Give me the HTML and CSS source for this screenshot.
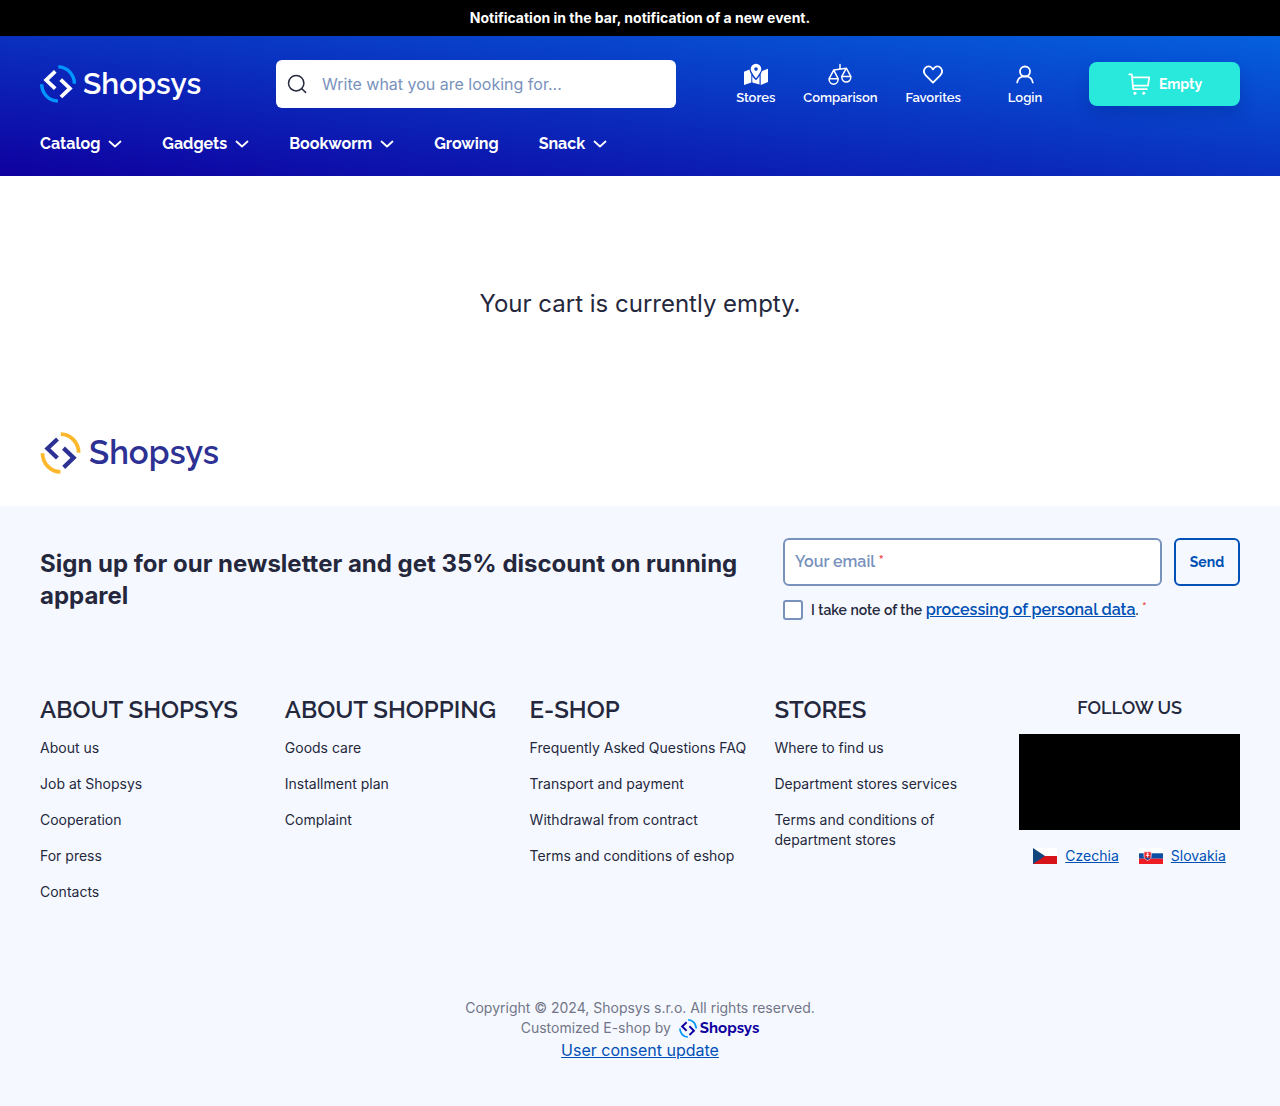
FILE: index.html
```html
<!DOCTYPE html>
<html lang="en">
<head>
<meta charset="utf-8">
<meta name="viewport" content="width=device-width, initial-scale=1">
<title>Cart | Shopsys</title>
<link rel="stylesheet" href="styles.css">
</head>
<body>
<svg class="sprite" aria-hidden="true">
  <symbol id="logo" viewBox="0 0 36 38">
    <g fill="none">
      <g class="logo-arc" stroke-width="3.4"><path d="M18.300 1.900A16.200 17 0 0 1 34.400 18.800M1.700 19.200A16.200 17 0 0 0 17.900 36"/></g>
      <path stroke="currentColor" stroke-width="3.8" d="M15.300 6.400 6.200 15l9 8.600M20.700 14.600l9.200 8.800-9 8.600"/>
    </g>
  </symbol>
  <symbol id="chevron" viewBox="0 0 14 14">
    <path d="m1.500 4.500 5.500 5 5.500-5" fill="none" stroke="currentColor" stroke-width="1.8" stroke-linecap="round" stroke-linejoin="round"/>
  </symbol>
</svg>

<div class="notice">Notification in the bar, notification of a new event.</div>

<header class="header">
  <div class="header-row">
    <a class="logo logo-header" href="#"><svg><use href="#logo"/></svg>Shopsys</a>
    <form class="search">
      <button class="search-button" type="submit" aria-label="Search">
        <svg viewBox="0 0 20 20" width="20" height="20" fill="none" stroke="currentColor" stroke-width="1.5" stroke-linecap="round"><circle cx="9.200" cy="9.200" r="7.700"/><path d="m14.800 14.800 3.800 3.600"/></svg>
      </button>
      <input class="search-input" type="search" aria-label="Search" placeholder="Write what you are looking for...">
    </form>
    <nav class="tools" aria-label="Account">
      <a class="tool" href="#">
        <svg viewBox="0 0 24 24" fill="currentColor"><path d="M0 8.700 5.500 6.400c.2 1.700 1 3.300 1.800 4.800v8.400L0 22zM8.300 12.900c.9 1.400 1.900 2.600 2.800 3.700.5.600 1.300.6 1.800 0 .8-1 1.700-2.200 2.600-3.500v8.500l-7.200-2zM17 10.600c.4-.9.8-1.800 1-2.700L24 5.700v13.400L16.700 22v-11zM12 .8a5.300 5.300 0 0 0-5.300 5.300c0 2.500 3.300 6.900 4.700 8.600.3.400.9.400 1.200 0 1.400-1.700 4.700-6.100 4.700-8.600A5.300 5.300 0 0 0 12 .8zm0 3.500a1.800 1.800 0 1 1 0 3.600 1.800 1.800 0 0 1 0-3.600z" fill-rule="evenodd"/></svg>
        Stores
      </a>
      <a class="tool" href="#">
        <svg viewBox="0 0 24 24" fill="none" stroke="currentColor" stroke-width="1.500" stroke-linecap="round" stroke-linejoin="round"><path d="M12 1.500v4.300M5.700 7 18.300 5.200M5.700 7.200 1 15.800M5.700 7.200l4.500 8.600M1 15.800h9.200c0 7.200-9.200 7.200-9.200 0zM18.300 5.200l-4.600 8.400M18.300 5.200l4.600 8.400M13.700 13.600h9.200c0 7.200-9.200 7.200-9.200 0z"/></svg>
        Comparison
      </a>
      <a class="tool" href="#">
        <svg viewBox="0 0 24 24" fill="none" stroke="currentColor" stroke-width="1.800" stroke-linejoin="round"><path d="m12 19.700-7-7.100C2.900 10.500 2.400 7.500 4 5.300c1.900-2.500 5.300-2.400 7.100-.1l.9 1.200.9-1.200c1.800-2.300 5.200-2.400 7.100.1 1.600 2.200 1.100 5.200-1 7.300z"/></svg>
        Favorites
      </a>
      <a class="tool tool-login" href="#">
        <svg viewBox="0 0 24 24" fill="none" stroke="currentColor" stroke-width="1.800" stroke-linecap="round"><circle cx="12" cy="8.500" r="5"/><path d="M4.200 19.500c.6-4.400 3.700-6.200 7.800-6.200s7.200 1.800 7.800 6.200"/></svg>
        Login
      </a>
      <a class="cart" href="#">
        <svg viewBox="0 0 24 24" width="24" height="24" fill="none" stroke="currentColor" stroke-width="1.700" stroke-linecap="round" stroke-linejoin="round"><path d="M2.200 2.400h2.600l1.400 14.800h13.600M5.200 5.400h17l-1.200 8.200H5.900"/><circle cx="7.900" cy="21.300" r="1.100" fill="currentColor" stroke-width="1"/><circle cx="16.700" cy="21.300" r="1.100" fill="currentColor" stroke-width="1"/></svg>
        Empty
      </a>
    </nav>
  </div>
  <nav class="menu" aria-label="Categories">
    <a href="#">Catalog<svg><use href="#chevron"/></svg></a>
    <a href="#">Gadgets<svg><use href="#chevron"/></svg></a>
    <a href="#">Bookworm<svg><use href="#chevron"/></svg></a>
    <a href="#">Growing</a>
    <a href="#">Snack<svg><use href="#chevron"/></svg></a>
  </nav>
</header>

<main class="main">
  <p class="empty">Your cart is currently empty.</p>
  <a class="logo logo-main" href="#"><svg><use href="#logo"/></svg>Shopsys</a>
</main>

<footer class="footer">
  <section class="newsletter">
    <h2 class="newsletter-title">Sign up for our newsletter and get 35% discount on running apparel</h2>
    <form class="newsletter-form">
      <div class="newsletter-row">
        <div class="field">
          <input class="field-input" id="email" type="email" required>
          <label class="field-label" for="email">Your email <span class="required">*</span></label>
        </div>
        <button class="send" type="submit">Send</button>
      </div>
      <div class="consent">
        <input class="checkbox" id="privacy" type="checkbox" required>
        <label for="privacy">I take note of the <a href="#">processing of personal data</a>. <span class="required required-raised">*</span></label>
      </div>
    </form>
  </section>

  <div class="columns">
    <section>
      <h3 class="column-title">About Shopsys</h3>
      <ul class="links">
        <li><a href="#">About us</a></li>
        <li><a href="#">Job at Shopsys</a></li>
        <li><a href="#">Cooperation</a></li>
        <li><a href="#">For press</a></li>
        <li><a href="#">Contacts</a></li>
      </ul>
    </section>
    <section>
      <h3 class="column-title">About shopping</h3>
      <ul class="links">
        <li><a href="#">Goods care</a></li>
        <li><a href="#">Installment plan</a></li>
        <li><a href="#">Complaint</a></li>
      </ul>
    </section>
    <section>
      <h3 class="column-title">E-shop</h3>
      <ul class="links">
        <li><a href="#">Frequently Asked Questions FAQ</a></li>
        <li><a href="#">Transport and payment</a></li>
        <li><a href="#">Withdrawal from contract</a></li>
        <li><a href="#">Terms and conditions of eshop</a></li>
      </ul>
    </section>
    <section>
      <h3 class="column-title">Stores</h3>
      <ul class="links">
        <li><a href="#">Where to find us</a></li>
        <li><a href="#">Department stores services</a></li>
        <li><a href="#">Terms and conditions of department stores</a></li>
      </ul>
    </section>
    <section>
      <h3 class="follow-title">Follow us</h3>
      <div class="social"></div>
      <div class="countries">
        <a href="#"><svg viewBox="0 0 24 16"><path fill="#fff" d="M0 0h24v8H0z"/><path fill="#d7141a" d="M0 8h24v8H0z"/><path fill="#11457e" d="m0 0 12 8-12 8z"/></svg>Czechia</a>
        <a href="#"><svg viewBox="0 0 24 16"><path fill="#fff" d="M0 0h24v5.300H0z"/><path fill="#0b4ea2" d="M0 5.300h24v5.400H0z"/><path fill="#ee1c25" d="M0 10.700h24V16H0z"/><path fill="#ee1c25" stroke="#fff" stroke-width=".7" d="M5 3.800h7.200v4.400c0 2.100-2 3.500-3.600 4.300C7 11.700 5 10.300 5 8.200z"/><path fill="#0b4ea2" d="M6 10.100c.8-.8 1.300-.5 1.600-.2.500-.6 1.500-.6 2 0 .3-.3.900-.6 1.700.2-.8.900-1.800 1.500-2.700 1.900-.9-.4-1.800-1-2.600-1.900z"/><path fill="none" stroke="#fff" stroke-width=".8" d="M8.600 4.600v5M7.300 5.900h2.600M6.800 7.500h3.600"/></svg>Slovakia</a>
      </div>
    </section>
  </div>

  <div class="legal">
    <p>Copyright © 2024, Shopsys s.r.o. All rights reserved.</p>
    <p class="author">Customized E-shop by <a class="logo logo-small" href="#"><svg><use href="#logo"/></svg>Shopsys</a></p>
    <a class="consent-link" href="#">User consent update</a>
  </div>
</footer>
</body>
</html>
```
FILE: styles.css
```css
:root {
  --text: #25283d;
  --link: #0050b5;
  --muted: #7892bc;
  --heading-font: Raleway, Lato, sans-serif;
}

* { box-sizing: border-box; }

body {
  margin: 0;
  color: var(--text);
  background: #fff;
  font: 14px/20px Inter, sans-serif;
}

h2, h3, p, ul { margin: 0; padding: 0; }
ul { list-style: none; }
a { color: inherit; text-decoration: none; }
input, button { font: inherit; color: inherit; }

.sprite { position: absolute; width: 0; height: 0; }

.notice {
  padding: 8px;
  color: #fff;
  background: #000;
  font-weight: 700;
  text-align: center;
}

.logo {
  display: flex;
  align-items: center;
  font-family: var(--heading-font);
  font-weight: 600;
}

.logo svg { flex: none; }
.logo-arc { stroke: var(--arc); }
.logo-header { --arc: #0096ff; gap: 7px; width: 160px; color: #fff; font-size: 30px; line-height: 38px; }
.logo-header svg { width: 36px; height: 38px; }
.logo-main { --arc: #fcb72b; gap: 8px; color: #2d3193; font-size: 33px; line-height: 42px; }
.logo-main svg { width: 41px; height: 42px; }
.logo-small { --arc: #0096ff; gap: 3px; color: #0f00a0; font-size: 15px; font-weight: 700; line-height: 20px; }
.logo-small svg { width: 18px; height: 19px; }

.header {
  padding: 24px 40px 20px;
  color: #fff;
  background: linear-gradient(to top right, #0f00a0, #0560de);
  font-family: var(--heading-font);
}

.header-row { display: flex; align-items: center; }

.search {
  display: flex;
  align-items: center;
  width: 400px;
  height: 48px;
  margin-left: 76px;
  padding: 0 11px;
  background: #fff;
  border-radius: 6px;
}

.search-button {
  display: flex;
  padding: 0;
  border: 0;
  background: none;
  color: var(--text);
}

.search-input {
  flex: 1;
  min-width: 0;
  padding: 0 15px;
  border: 0;
  outline: 0;
  background: none;
  color: var(--text);
  font: 16px/24px Inter, sans-serif;
}

.search-input::placeholder { color: var(--muted); opacity: 1; }

.tools { display: flex; align-items: center; gap: 28px; margin-left: auto; }

.tool {
  display: flex;
  flex-direction: column;
  align-items: center;
  gap: 2px;
  padding-top: 2px;
  font-size: 13px;
  font-weight: 600;
  line-height: 18px;
}

.tool svg { width: 24px; height: 24px; }
.tool-login { min-width: 72px; }

.cart {
  display: flex;
  align-items: center;
  justify-content: center;
  gap: 8px;
  width: 151px;
  height: 44px;
  border-radius: 8px;
  background: #29e8dc;
  box-shadow: 0 8px 16px rgb(0 20 100 / 20%);
  font-size: 14px;
  font-weight: 700;
}

.menu { display: flex; gap: 40px; margin-top: 24px; }

.menu a {
  display: flex;
  align-items: center;
  gap: 8px;
  font-size: 16px;
  font-weight: 700;
  line-height: 24px;
}

.menu svg { width: 14px; height: 14px; }

.main { padding: 112px 40px 32px; }

.empty {
  margin-bottom: 112px;
  font-size: 24px;
  line-height: 32px;
  text-align: center;
}

.footer { padding: 32px 40px 44px; background: #f5f9ff; }

.newsletter {
  display: grid;
  grid-template-columns: 1fr 457px;
  gap: 40px;
  align-items: center;
}

.newsletter-title { font-size: 24px; line-height: 32px; }
.newsletter-form { font-family: var(--heading-font); }
.newsletter-row { display: flex; gap: 12px; }

.field { position: relative; flex: 1; }

.field-input {
  display: block;
  width: 100%;
  height: 48px;
  padding: 0 10px;
  border: 2px solid var(--muted);
  border-radius: 6px;
  outline: 0;
  background: #fff;
}

.field-label {
  position: absolute;
  top: 12px;
  left: 12px;
  color: var(--muted);
  font-size: 16px;
  font-weight: 600;
  line-height: 24px;
}

.required { color: #ec5353; }
.required-raised { line-height: 20px; vertical-align: top; }

.send {
  width: 66px;
  padding: 0;
  border: 2px solid var(--link);
  border-radius: 6px;
  background: transparent;
  color: var(--link);
  font-weight: 700;
}

.consent {
  display: flex;
  align-items: center;
  gap: 8px;
  margin-top: 12px;
  font-weight: 600;
  line-height: 24px;
}

.checkbox {
  appearance: none;
  width: 20px;
  height: 20px;
  margin: 0;
  border: 2px solid var(--muted);
  border-radius: 3px;
  background: #fff;
}

.consent a { color: var(--link); font-size: 16px; text-decoration: underline; }

.columns {
  display: grid;
  grid-template-columns: repeat(5, minmax(0, 1fr));
  gap: 24px;
  margin-top: 72px;
}

.column-title, .follow-title {
  font-family: var(--heading-font);
  font-weight: 600;
  text-transform: uppercase;
}

.column-title { margin-bottom: 12px; font-size: 24px; line-height: 32px; white-space: nowrap; }
.follow-title { margin-bottom: 12px; font-size: 18px; line-height: 28px; text-align: center; }
.links { display: grid; gap: 16px; }
.social { height: 96px; background: #000; }

.countries { display: flex; justify-content: center; gap: 20px; margin-top: 16px; }

.countries a {
  display: flex;
  align-items: center;
  gap: 8px;
  color: var(--link);
  text-decoration: underline;
}

.countries svg { width: 24px; height: 16px; }

.legal {
  display: flex;
  flex-direction: column;
  align-items: center;
  margin-top: 96px;
  color: #727588;
}

.author { display: flex; align-items: center; gap: 8px; }
.consent-link { color: var(--link); font-size: 16px; line-height: 24px; text-decoration: underline; }
```
